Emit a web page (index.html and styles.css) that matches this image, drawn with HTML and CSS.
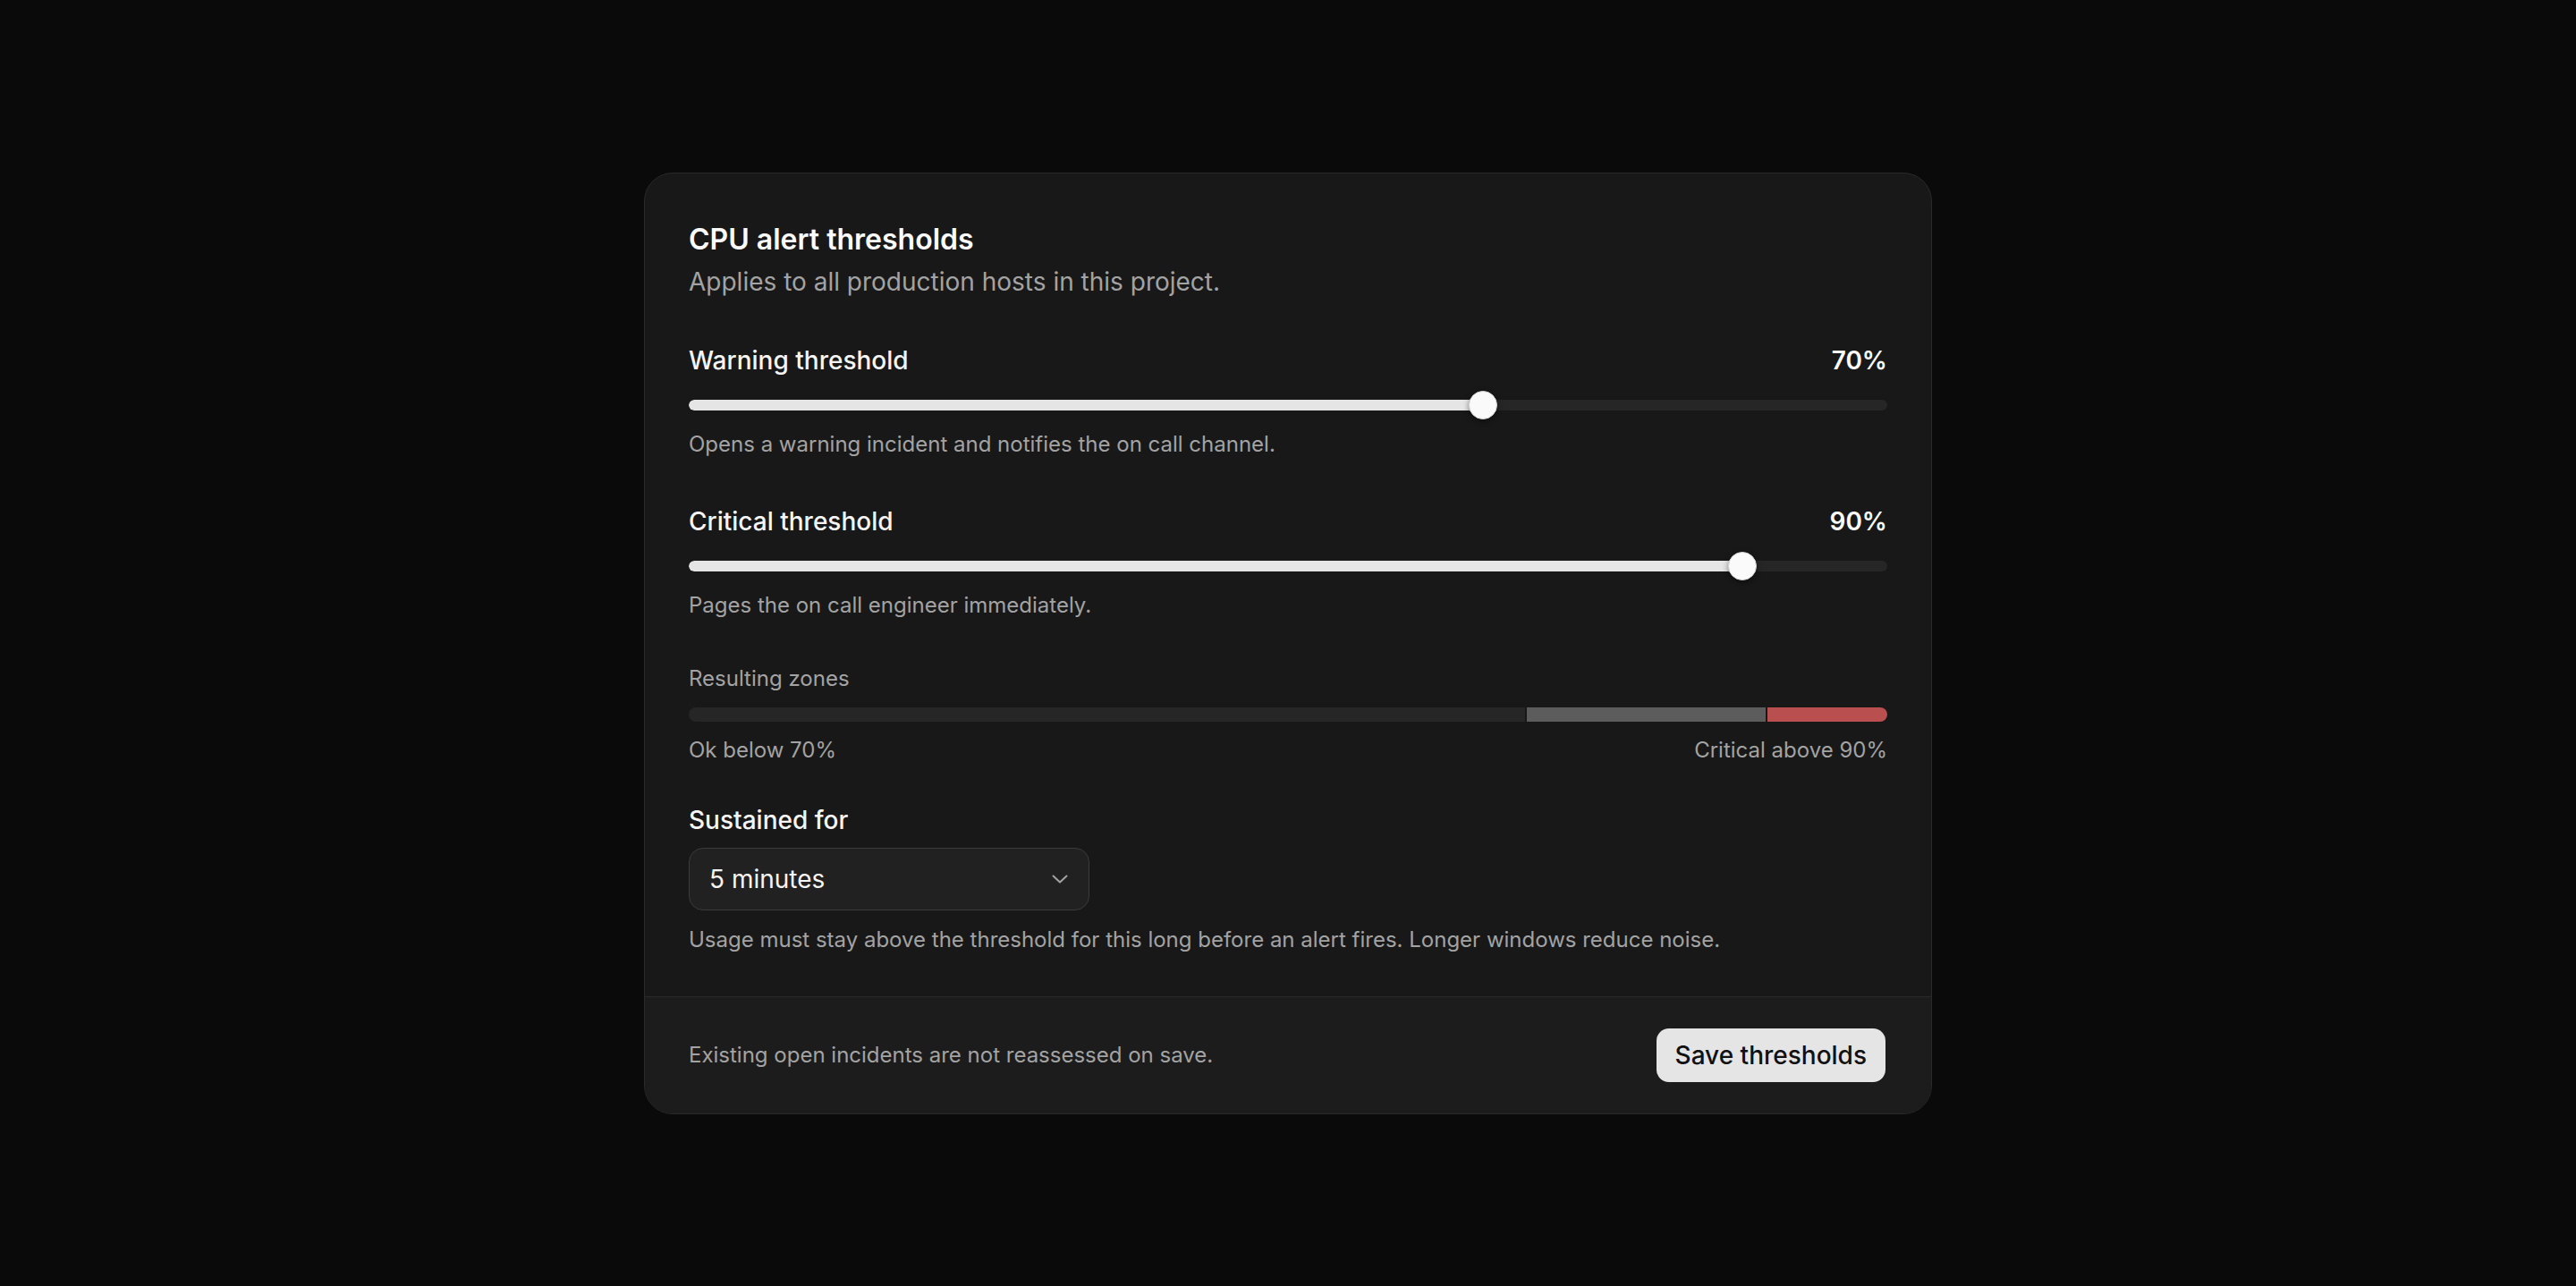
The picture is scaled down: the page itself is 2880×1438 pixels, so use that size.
FILE: index.html
```html
<!DOCTYPE html>
<html lang="en">
<head>
<meta charset="utf-8">
<title>CPU alert thresholds</title>
<link rel="stylesheet" href="styles.css">
</head>
<body>
<main class="card">
  <div class="card-body">
    <header class="head">
      <h1 class="title">CPU alert thresholds</h1>
      <p class="subtitle">Applies to all production hosts in this project.</p>
    </header>

    <section class="field field-first">
      <div class="field-row">
        <span class="label">Warning threshold</span>
        <span class="value">70%</span>
      </div>
      <div class="slider">
        <div class="track"><div class="fill" style="width:66.3%"></div></div>
        <div class="thumb" style="left:66.3%"></div>
      </div>
      <p class="help">Opens a warning incident and notifies the on call channel.</p>
    </section>

    <section class="field">
      <div class="field-row">
        <span class="label">Critical threshold</span>
        <span class="value">90%</span>
      </div>
      <div class="slider">
        <div class="track"><div class="fill" style="width:87.9%"></div></div>
        <div class="thumb" style="left:87.9%"></div>
      </div>
      <p class="help">Pages the on call engineer immediately.</p>
    </section>

    <section class="zones">
      <p class="zones-title">Resulting zones</p>
      <div class="zone-bar">
        <div class="zone zone-ok" style="flex-grow:70"></div>
        <div class="zone zone-warn" style="flex-grow:20"></div>
        <div class="zone zone-crit" style="flex-grow:10"></div>
      </div>
      <div class="zone-legend">
        <span>Ok below 70%</span>
        <span>Critical above 90%</span>
      </div>
    </section>

    <section class="sustained">
      <div class="label">Sustained for</div>
      <div class="select">
        <span>5 minutes</span>
        <svg class="chevron" width="18" height="10" viewBox="0 0 18 10" fill="none"><path d="M1.5 1.5 L9 8.5 L16.5 1.5" stroke="#a3a3a3" stroke-width="2" stroke-linecap="round" stroke-linejoin="round"/></svg>
      </div>
      <p class="help help-sustained">Usage must stay above the threshold for this long before an alert fires. Longer windows reduce noise.</p>
    </section>
  </div>

  <footer class="card-footer">
    <p class="footer-note">Existing open incidents are not reassessed on save.</p>
    <button class="save" type="button">Save thresholds</button>
  </footer>
</main>
</body>
</html>
```

FILE: styles.css
```css
* { box-sizing: border-box; }

html, body { height: 100%; }

body {
  margin: 0;
  background: #0a0a0a;
  font-family: Inter, "Noto Sans", "Liberation Sans", sans-serif;
  display: flex;
  align-items: center;
  justify-content: center;
  color: #f5f5f5;
}

p { margin: 0; }
h1 { margin: 0; }

.card {
  width: 1440px;
  background: #181818;
  border: 1px solid #2a2a2a;
  border-radius: 32px;
  overflow: hidden;
}

.card-body {
  padding: 49px 49px 45px;
}

.title {
  font-size: 32px;
  line-height: 50px;
  font-weight: 600;
  color: #fafafa;
}

.subtitle {
  margin-top: 2px;
  font-size: 28px;
  line-height: 40px;
  color: #a3a3a3;
}

.field { margin-top: 48px; }
.field-first { margin-top: 48px; }

.field-row {
  display: flex;
  justify-content: space-between;
  align-items: baseline;
  height: 40px;
}

.label {
  font-size: 28px;
  line-height: 40px;
  font-weight: 500;
  color: #f5f5f5;
}

.value {
  font-size: 28px;
  line-height: 40px;
  font-weight: 600;
  color: #fafafa;
}

.slider {
  position: relative;
  height: 32px;
  margin-top: 14px;
  display: flex;
  align-items: center;
}

.track {
  width: 100%;
  height: 12px;
  border-radius: 6px;
  background: #262626;
  overflow: hidden;
}

.fill {
  height: 100%;
  background: #e5e5e5;
  border-radius: 6px 0 0 6px;
}

.thumb {
  position: absolute;
  top: 0;
  width: 32px;
  height: 32px;
  margin-left: -16px;
  border-radius: 50%;
  background: #fafafa;
  border: 1px solid #d4d4d4;
  box-shadow: 0 2px 6px rgba(0, 0, 0, 0.45);
}

.help {
  margin-top: 10px;
  font-size: 24px;
  line-height: 36px;
  color: #a3a3a3;
}

.zones { margin-top: 46px; }

.zones-title {
  font-size: 24px;
  line-height: 36px;
  color: #a3a3a3;
}

.zone-bar {
  display: flex;
  gap: 2px;
  height: 16px;
  margin-top: 14px;
  border-radius: 8px;
  overflow: hidden;
}

.zone { flex-basis: 0; height: 100%; }
.zone-ok { background: #262626; }
.zone-warn { background: #5c5c5c; }
.zone-crit { background: #b94f4f; }

.zone-legend {
  display: flex;
  justify-content: space-between;
  margin-top: 14px;
  font-size: 24px;
  line-height: 36px;
  color: #a3a3a3;
}

.sustained { margin-top: 40px; }

.select {
  margin-top: 11px;
  width: 448px;
  height: 70px;
  padding: 0 23px 0 22px;
  display: flex;
  align-items: center;
  justify-content: space-between;
  background: #212121;
  border: 1px solid #3b3b3b;
  border-radius: 16px;
  font-size: 28px;
  color: #f5f5f5;
}

.help-sustained { margin-top: 15px; }

.card-footer {
  display: flex;
  align-items: center;
  justify-content: space-between;
  padding: 35px 51px 35px 49px;
  background: #1c1c1c;
  border-top: 1px solid #2a2a2a;
}

.footer-note {
  font-size: 24px;
  line-height: 36px;
  color: #a3a3a3;
}

.save {
  height: 60px;
  padding: 0 21px;
  border: none;
  border-radius: 14px;
  background: #e5e5e5;
  color: #111111;
  font-family: inherit;
  font-size: 28px;
  font-weight: 500;
}
```
